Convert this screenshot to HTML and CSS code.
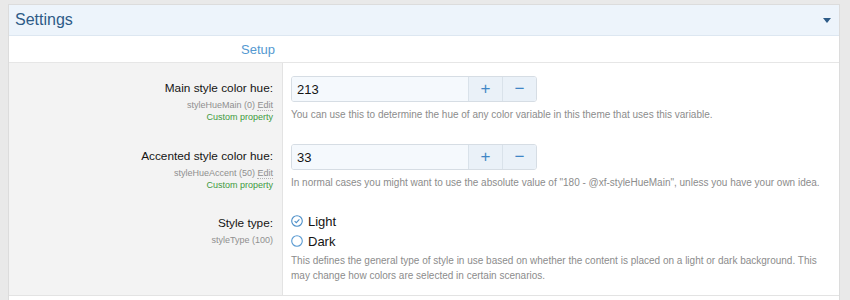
FILE: index.html
```html
<!DOCTYPE html>
<html lang="en">
<head>
  <meta charset="UTF-8">
  <title>Style properties</title>
  <link rel="stylesheet" href="styles.css">
</head>
<body>

  <div class="block">
    <h2 class="block-header">
      <span>Settings</span>
      <span class="caret"></span>
    </h2>

    <div class="section-head">
      <span class="section-title">Setup</span>
    </div>

    <!-- Main hue -->
    <div class="form-row">
      <div class="row-label">
        <div class="label-main">Main style color hue:</div>
        <div class="label-hint">styleHueMain (0) <span class="edit">Edit</span></div>
        <div class="label-custom">Custom property</div>
      </div>
      <div class="row-input">
        <div class="spinbox">
          <input type="text" value="213">
          <button type="button">+</button>
          <button type="button">&minus;</button>
        </div>
        <div class="explain">You can use this to determine the hue of any color variable in this theme that uses this variable.</div>
      </div>
    </div>

    <!-- Accent hue -->
    <div class="form-row">
      <div class="row-label">
        <div class="label-main">Accented style color hue:</div>
        <div class="label-hint">styleHueAccent (50) <span class="edit">Edit</span></div>
        <div class="label-custom">Custom property</div>
      </div>
      <div class="row-input">
        <div class="spinbox">
          <input type="text" value="33">
          <button type="button">+</button>
          <button type="button">&minus;</button>
        </div>
        <div class="explain">In normal cases you might want to use the absolute value of "180 - @xf-styleHueMain", unless you have your own idea.</div>
      </div>
    </div>

    <!-- Style type -->
    <div class="form-row last">
      <div class="row-label">
        <div class="label-main">Style type:</div>
        <div class="label-hint">styleType (100)</div>
      </div>
      <div class="row-input">
        <label class="radio">
          <svg width="12" height="12" viewBox="0 0 12 12">
            <circle cx="6" cy="6" r="5.3" fill="none" stroke="#4d8fc8" stroke-width="1.1"/>
            <path d="M3.6 6.1 L5.3 7.7 L8.4 4.4" fill="none" stroke="#4d8fc8" stroke-width="1.1"/>
          </svg>
          Light
        </label>
        <label class="radio">
          <svg width="12" height="12" viewBox="0 0 12 12">
            <circle cx="6" cy="6" r="5.3" fill="none" stroke="#5b9bd2" stroke-width="1.1"/>
          </svg>
          Dark
        </label>
        <div class="explain">This defines the general type of style in use based on whether the content is placed on a light or dark background. This may change how colors are selected in certain scenarios.</div>
      </div>
    </div>
  </div>

</body>
</html>
```

FILE: styles.css
```css
/* General */
body {
  font-family: 'Liberation Sans', Arial, sans-serif;
  background-color: #e9e9e9;
  margin: 0;
  padding: 4px 10px 0 8px;
  color: #141414;
}

.block {
  background-color: white;
  border: 1px solid #dcdcdc;
  border-bottom: none;
  padding-bottom: 8px;
}

/* Header */
.block-header {
  margin: 0;
  height: 30px;
  display: flex;
  align-items: center;
  justify-content: space-between;
  padding: 0 7px 0 6px;
  background-color: #edf4fb;
  border-bottom: 1px solid #dde7f1;
  color: #2d5b87;
  font-size: 16px;
  font-weight: normal;
}

.caret {
  width: 0;
  height: 0;
  border-left: 4px solid transparent;
  border-right: 4px solid transparent;
  border-top: 5px solid #2d5b87;
  margin-right: 1px;
}

/* Section heading */
.section-head {
  display: grid;
  grid-template-columns: 274px 1fr;
  height: 26px;
  align-items: center;
  border-bottom: 1px solid #e6e6e6;
}

.section-title {
  text-align: right;
  padding-right: 8px;
  color: #5499d1;
  font-size: 13px;
}

/* Form rows */
.form-row {
  display: grid;
  grid-template-columns: 274px 1fr;
}

.row-label {
  background-color: #f3f3f3;
  border-right: 1px solid #e3e3e3;
  text-align: right;
  padding: 16px 9px 0 0;
  box-sizing: border-box;
}

.label-main {
  font-size: 11.8px;
  line-height: 18px;
}

.label-hint {
  font-size: 9px;
  line-height: 12px;
  color: #8f8f8f;
  margin-top: 2px;
}

.label-hint .edit {
  border-bottom: 1px dotted #b5b5b5;
}

.label-custom {
  font-size: 9px;
  line-height: 12px;
  color: #3e9a3e;
}

.row-input {
  padding: 13px 8px 9px 8px;
}

.form-row.last .row-label {
  padding-top: 15px;
}

.form-row.last .row-input {
  padding-top: 12px;
  padding-bottom: 12px;
}

.form-row.last {
  border-bottom: 1px solid #e3e3e3;
}

/* Spin box */
.spinbox {
  display: flex;
  width: 246px;
  height: 26px;
  border: 1px solid #d6dde4;
  border-radius: 3px;
  box-sizing: border-box;
  overflow: hidden;
}

.spinbox input {
  flex: 1;
  min-width: 0;
  border: none;
  background-color: #f5f9fd;
  font-family: inherit;
  font-size: 13px;
  color: #141414;
  padding: 0 5px;
  outline: none;
}

.spinbox button {
  width: 34px;
  border: none;
  border-left: 1px solid #d9e2ea;
  background-color: #eaf1f8;
  color: #3f86c6;
  font-family: inherit;
  font-size: 17px;
  padding: 0;
  cursor: pointer;
}

.explain {
  margin-top: 5px;
  font-size: 10px;
  line-height: 15px;
  color: #8c8c8c;
  padding-right: 4px;
}

/* Radios */
.radio {
  display: flex;
  align-items: center;
  gap: 5px;
  height: 20px;
  font-size: 13px;
}

.radio + .explain {
  margin-top: 2px;
}
```
